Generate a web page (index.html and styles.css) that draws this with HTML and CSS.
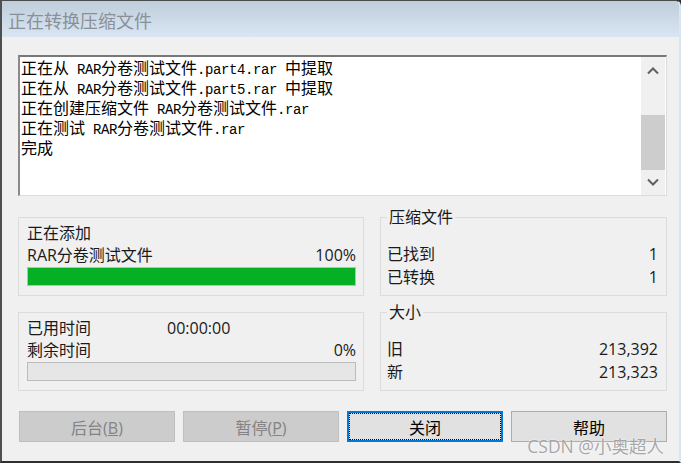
FILE: index.html
```
<!DOCTYPE html>
<html lang="zh-CN">
<head>
    <meta charset="UTF-8">
    <meta name="viewport" content="width=device-width, initial-scale=1.0">
    <title>正在转换压缩文件</title>
    <link rel="stylesheet" href="styles.css">
</head>
<body>
    <div class="window">
        <div class="titlebar">正在转换压缩文件</div>
        <div class="client">
            <!-- Log -->
            <div class="log">
                <div class="log-text">
                    <div>正在从<span class="mono"> RAR</span>分卷测试文件<span class="mono">.part4.rar </span>中提取</div>
                    <div>正在从<span class="mono"> RAR</span>分卷测试文件<span class="mono">.part5.rar </span>中提取</div>
                    <div>正在创建压缩文件<span class="mono"> RAR</span>分卷测试文件<span class="mono">.rar</span></div>
                    <div>正在测试<span class="mono"> RAR</span>分卷测试文件<span class="mono">.rar</span></div>
                    <div>完成</div>
                </div>
                <div class="scrollbar">
                    <div class="sb-btn">
                        <svg width="24" height="24" viewBox="0 0 24 24"><path d="M7 16.5 L12 11.5 L17 16.5" fill="none" stroke="#606060" stroke-width="2"/></svg>
                    </div>
                    <div class="sb-track"><div class="sb-thumb"></div></div>
                    <div class="sb-btn">
                        <svg width="24" height="24" viewBox="0 0 24 24"><path d="M7 8.5 L12 13.5 L17 8.5" fill="none" stroke="#606060" stroke-width="2"/></svg>
                    </div>
                </div>
            </div>

            <!-- Stats -->
            <div class="stats">
                <div class="panel">
                    <div class="row">正在添加</div>
                    <div class="row"><span>RAR分卷测试文件</span><span>100%</span></div>
                    <div class="bar"><div class="fill" style="width: 100%"></div></div>
                </div>
                <fieldset class="group">
                    <legend>压缩文件</legend>
                    <div class="row"><span>已找到</span><span>1</span></div>
                    <div class="row"><span>已转换</span><span>1</span></div>
                </fieldset>
                <div class="panel">
                    <div class="row start"><span class="label">已用时间</span><span>00:00:00</span></div>
                    <div class="row"><span>剩余时间</span><span>0%</span></div>
                    <div class="bar"><div class="fill" style="width: 0%"></div></div>
                </div>
                <fieldset class="group">
                    <legend>大小</legend>
                    <div class="row"><span>旧</span><span>213,392</span></div>
                    <div class="row"><span>新</span><span>213,323</span></div>
                </fieldset>
            </div>

            <!-- Buttons -->
            <div class="buttons">
                <button disabled>后台(<u>B</u>)</button>
                <button disabled>暂停(<u>P</u>)</button>
                <button class="default">关闭</button>
                <button>帮助</button>
            </div>
        </div>
        <div class="watermark">CSDN @小奥超人</div>
    </div>
</body>
</html>
```

FILE: styles.css
```
body {
    margin: 0;
    padding: 0;
    background: #2f2f2f;
    font-family: "Open Sans", "Noto Sans CJK SC", sans-serif;
    font-size: 16px;
    color: #1a1a1a;
}
.window {
    position: relative;
    width: 681px;
    height: 463px;
    box-sizing: border-box;
    display: flex;
    flex-direction: column;
    border-top: 1px solid #4a4a4a;
    border-left: 2px solid #4f4f4f;
    border-right: 2px solid #d9e5f1;
    border-bottom: 2px solid #2f2f2f;
    border-top-right-radius: 6px;
    background: #f0f0f0;
    overflow: hidden;
}
.titlebar {
    height: 36px;
    box-sizing: border-box;
    padding: 3px 0 0 6px;
    line-height: 33px;
    font-family: "Noto Sans CJK SC", sans-serif;
    font-size: 18px;
    color: #8a9098;
    background: linear-gradient(#bfcedb, #d9e5f2);
}
.client {
    flex: 1;
    padding: 18px 12px 0 16px;
    background: #f0f0f0;
}

/* log box */
.log {
    display: flex;
    height: 141px;
    box-sizing: border-box;
    background: #fff;
    border-style: solid;
    border-width: 2px 1px 1px 2px;
    border-color: #787878 #dcdcdc #dcdcdc #8a8a8a;
    padding-right: 1px;
    overflow: hidden;
}
.log-text {
    flex: 1;
    padding: 0 0 0 1px;
    font-family: "Noto Sans CJK SC", sans-serif;
    font-size: 16px;
    line-height: 20px;
    color: #000;
    white-space: nowrap;
}
.log-text div {
    height: 20px;
}
.mono {
    font-family: "Liberation Mono", monospace;
    font-size: 14px;
    line-height: 1;
    letter-spacing: -0.4px;
}
.scrollbar {
    width: 24px;
    display: flex;
    flex-direction: column;
    background: #f0f0f0;
}
.sb-btn {
    height: 24px;
}
.sb-btn svg {
    display: block;
}
.sb-track {
    flex: 1;
    display: flex;
    flex-direction: column;
    justify-content: flex-end;
}
.sb-thumb {
    height: 55px;
    margin-bottom: 1px;
    background: #cdcdcd;
}

/* stats */
.stats {
    display: grid;
    grid-template-columns: 346px 1fr;
    column-gap: 16px;
    row-gap: 5px;
    align-items: start;
    margin-top: 10px;
}
.panel {
    margin-top: 11px;
    border: 1px solid #dcdcdc;
    padding: 4px 7px 9px 8px;
}
.row {
    display: flex;
    justify-content: space-between;
    line-height: 22px;
    white-space: nowrap;
}
.row.start {
    justify-content: flex-start;
}
.row .label {
    width: 140px;
}
.bar {
    height: 19px;
    box-sizing: border-box;
    margin-top: 1px;
    border: 1px solid #bcbcbc;
    background: #e6e6e6;
}
.fill {
    height: 100%;
    background: #06b025;
}
.group {
    margin: 0;
    min-width: 0;
    border: 1px solid #dcdcdc;
    padding: 15px 8px 6px 6px;
}
.group legend {
    padding: 0 2px;
    line-height: 22px;
}
.group .row {
    line-height: 23px;
}

/* buttons */
.buttons {
    display: grid;
    grid-template-columns: repeat(4, 156px);
    gap: 8px;
    margin-top: 20px;
    padding-left: 1px;
}
button {
    height: 31px;
    font-family: "Open Sans", "Noto Sans CJK SC", sans-serif;
    font-size: 16px;
    color: #000;
    background: #e1e1e1;
    border: 1px solid #adadad;
    padding: 0;
}
button:disabled {
    background: #cccccc;
    border-color: #bfbfbf;
    color: #838383;
}
button.default {
    border: 2px solid #0078d7;
    outline: 1px dotted #000;
    outline-offset: -3px;
}
.watermark {
    position: absolute;
    right: 15px;
    bottom: 3px;
    font-size: 17.5px;
    color: rgba(130, 130, 130, 0.7);
    text-shadow: 0 0 2px #fff;
}
```
